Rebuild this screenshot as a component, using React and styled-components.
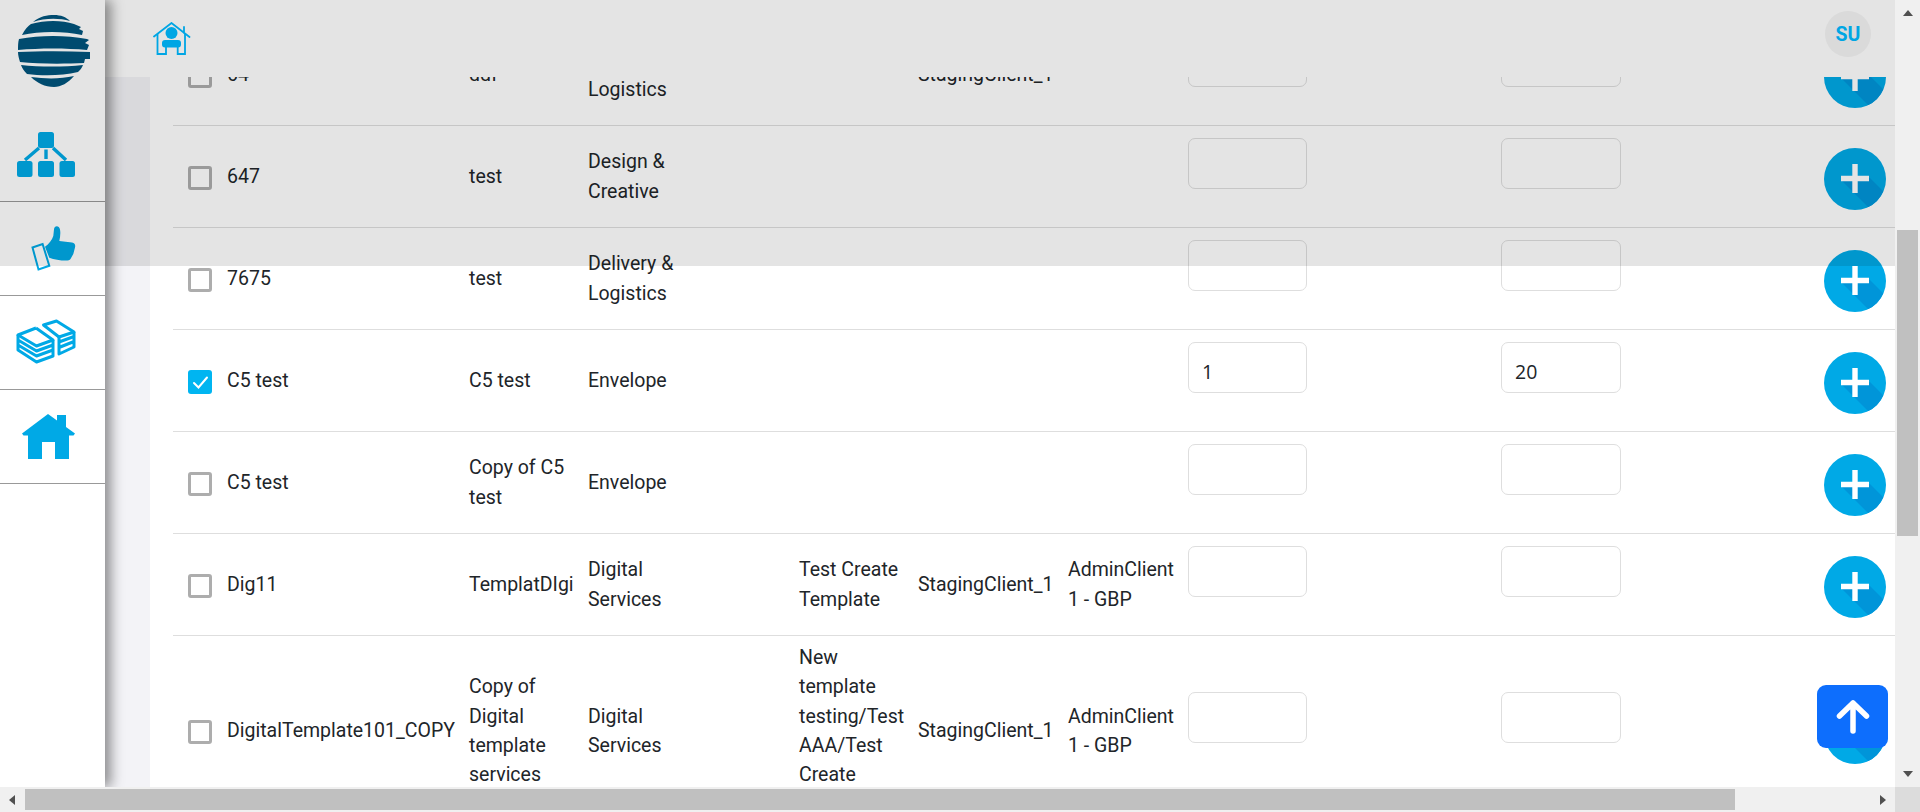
import React from 'react';
import styled, { createGlobalStyle } from 'styled-components';

const rows = [
  { name: '64', template: 'ddf', category: 'Delivery & Logistics', client: 'StagingClient_1' },
  { name: '647', template: 'test', category: 'Design & Creative' },
  { name: '7675', template: 'test', category: 'Delivery & Logistics' },
  { name: 'C5 test', template: 'C5 test', category: 'Envelope', checked: true, qty: '1', price: '20' },
  { name: 'C5 test', template: 'Copy of C5 test', category: 'Envelope' },
  {
    name: 'Dig11',
    template: 'TemplatDIgi',
    category: 'Digital Services',
    path: 'Test Create Template',
    client: 'StagingClient_1',
    admin: 'AdminClient 1 - GBP',
  },
  {
    name: 'DigitalTemplate101_COPY',
    template: 'Copy of Digital template services',
    category: 'Digital Services',
    path: 'New template testing/Test AAA/Test Create Template',
    client: 'StagingClient_1',
    admin: 'AdminClient 1 - GBP',
  },
];

const GlobalStyle = createGlobalStyle`
  html, body {
    margin: 0;
    height: 100%;
    overflow: hidden;
    font-family: Roboto, "Liberation Sans", sans-serif;
    color: #212529;
  }
  * { box-sizing: border-box; }
`;

const Page = styled.div`
  position: relative;
  width: 1920px;
  height: 812px;
  display: grid;
  grid-template-columns: 1895px 25px;
  grid-template-rows: 787px 25px;
  overflow: hidden;
  background: #fff;
`;

const Viewport = styled.div`
  display: flex;
  min-width: 0;
  min-height: 0;
  overflow: hidden;
`;

const Sidebar = styled.nav`
  position: relative;
  z-index: 2;
  flex: 0 0 105px;
  background: #fff;
  box-shadow: 6px 0 12px rgba(0, 0, 0, 0.42);
`;

const LogoBox = styled.div`
  height: 108px;
  padding: 15px 0 0 18px;
  svg { display: block; }
`;

const NavItem = styled.div`
  height: 94px;
  border-bottom: 1px solid #999;
  svg { display: block; }
`;

const Main = styled.div`
  flex: 1;
  min-width: 0;
  display: flex;
  flex-direction: column;
`;

const Header = styled.header`
  position: relative;
  z-index: 1;
  flex: 0 0 77px;
  display: flex;
  align-items: flex-start;
  justify-content: space-between;
  padding: 22px 24px 0 48px;
  background: #fff;
`;

const Avatar = styled.div`
  width: 46px;
  height: 46px;
  margin-top: -11px;
  border-radius: 50%;
  background: #f4f4f4;
  color: #00baff;
  font-size: 19.5px;
  font-weight: 700;
  display: flex;
  align-items: center;
  justify-content: center;
`;

const Body = styled.div`
  flex: 1;
  min-height: 0;
  overflow: hidden;
  padding-left: 45px;
  background: #f3f3f7;
`;

const Table = styled.div`
  height: 100%;
  overflow: hidden;
  padding-left: 23px;
  background: #fff;
`;

const Rows = styled.div`
  margin-top: -53px;
`;

const Row = styled.div`
  display: grid;
  grid-template-columns: 54px 242px 119px 211px 119px 150px 120px 313px 323px 71px;
  align-items: center;
  min-height: 102px;
  padding: 7px 0;
  border-bottom: 1px solid #dedede;
`;

const CheckBox = styled.span`
  width: 24px;
  height: 24px;
  margin: 3px 0 0 15px;
  border-radius: 3px;
  border: ${(p) => (p.$checked ? 'none' : '3px solid #adadad')};
  background: ${(p) => (p.$checked ? '#00b5f1' : '#fff')};
  display: flex;
  align-items: center;
  justify-content: center;
`;

const Cell = styled.div`
  font-size: 19.5px;
  line-height: 29.25px;
  padding-right: ${(p) => p.$pad || 0}px;
`;

const NumberBox = styled.input`
  display: block;
  width: ${(p) => p.$width}px;
  height: 51px;
  margin-bottom: 27px;
  padding: 8px 13px 0;
  border: 1px solid #dedede;
  border-radius: 7px;
  background: #fff;
  color: #212529;
  font-family: "Open Sans", sans-serif;
  font-size: 19.5px;
  outline: none;
`;

const AddButton = styled.button`
  position: relative;
  width: 62px;
  height: 62px;
  margin-top: 5px;
  padding: 0;
  border: none;
  border-radius: 50%;
  overflow: hidden;
  background: #00a9e6;
  svg { display: block; }
`;

const BackToTop = styled.button`
  position: absolute;
  z-index: 4;
  left: 1817px;
  top: 685px;
  width: 71px;
  height: 63px;
  padding: 0;
  border: none;
  border-radius: 9px;
  background: #0d6efd;
  display: flex;
  align-items: center;
  justify-content: center;
`;

const Dim = styled.div`
  position: absolute;
  z-index: 3;
  left: 0;
  top: 0;
  width: 1895px;
  height: 266px;
  background: rgba(0, 0, 0, 0.105);
  pointer-events: none;
`;

const VerticalBar = styled.div`
  grid-column: 2;
  grid-row: 1;
  display: flex;
  flex-direction: column;
  align-items: center;
  background: #f0f0f0;
`;

const HorizontalBar = styled.div`
  grid-column: 1;
  grid-row: 2;
  display: flex;
  align-items: center;
  background: #f0f0f0;
`;

const BarCorner = styled.div`
  grid-column: 2;
  grid-row: 2;
  background: #dcdcdc;
`;

const Arrow = styled.span`
  flex: 0 0 auto;
  width: 0;
  height: 0;
  border-style: solid;
  border-color: transparent;
  ${(p) => p.$dir === 'up' && 'margin-top: 10px; border-width: 0 5.5px 6px; border-bottom-color: #505050;'}
  ${(p) => p.$dir === 'down' && 'margin-top: auto; margin-bottom: 10px; border-width: 6px 5.5px 0; border-top-color: #505050;'}
  ${(p) => p.$dir === 'left' && 'margin-left: 9px; border-width: 5.5px 6px 5.5px 0; border-right-color: #505050;'}
  ${(p) => p.$dir === 'right' && 'margin-left: auto; margin-right: 9px; border-width: 5.5px 0 5.5px 6px; border-left-color: #505050;'}
`;

const VerticalThumb = styled.div`
  width: 21px;
  height: 306px;
  margin-top: 214px;
  background: #c0c0c0;
`;

const HorizontalThumb = styled.div`
  width: 1710px;
  height: 21px;
  margin-left: 10px;
  background: #c0c0c0;
`;

const GlobeLogo = () => (
  <svg width="72" height="72" viewBox="0 0 72 72" fill="#00547d">
    <path d="M15 7 C22 1 29 0 36 0 C43 0 48 2 52 6 C41 3 27 3 15 7Z" />
    <path d="M4 20 C7 14 10 11 13 9 C27 5 44 5 56 9 L63 12 L61 14 L65 16 L64 20 C46 16 22 16 4 20Z" />
    <path d="M1 24 C22 20 48 20 69 24 L71 25 L67 28 L71 30 L69 35 C48 33 22 33 0 35 C0 31 0 27 1 24Z" />
    <path d="M0 37 C22 36 48 36 72 37 L72 44 L67 44 L66 48 C46 49 20 49 2 47 C1 44 0 40 0 37Z" />
    <path d="M3 50 C22 52 46 52 65 50 C64 53 62 55 60 57 C44 61 24 61 9 59 C6 56 4 53 3 50Z" />
    <path d="M13 62 C28 64 43 64 56 61 C50 68 43 72 36 72 C27 72 19 68 13 62Z" />
  </svg>
);

const OrgIcon = () => (
  <svg width="105" height="93" viewBox="0 1 105 93" fill="#00a9e6">
    <rect x="38" y="25" width="16" height="16" rx="2.5" />
    <rect x="17" y="54" width="15.5" height="16" rx="2.5" />
    <rect x="38" y="54" width="16" height="16" rx="2.5" />
    <rect x="59.5" y="54" width="15.5" height="16" rx="2.5" />
    <path d="M46 42.5V52M39 41L25 53M53 41L66 53" stroke="#00a9e6" strokeWidth="3.4" fill="none" />
  </svg>
);

const ThumbIcon = () => (
  <svg width="105" height="93" viewBox="0 1 105 93" fill="#00a9e6">
    <path d="M45 45.7 C49 43 52 39 53.3 35 L54 28.3 C54.3 24.5 59 24 60 28.5 C60.7 32 60.2 36 59.3 40 L72 41.5 C75 42.3 75.6 44 75 46.5 L73.3 53 L70.5 58 C69.8 59.3 68 59.6 66 59.6 C60 59.6 54 58.5 49.3 56.7Z" />
    <path d="M32.5 46.5 L42.6 43 L49.3 64.8 L38.5 68.5Z" fill="none" stroke="#00a9e6" strokeWidth="2" />
  </svg>
);

const MoneyIcon = () => (
  <svg width="105" height="93" viewBox="0 1 105 93" fill="none" stroke="#00a9e6" strokeWidth="3" strokeLinejoin="round">
    <path d="M36 33 L18 40 L36.5 51 L53 45 L36 33" />
    <path d="M43.5 30 L56.5 26 L74 37 L59 42Z" />
    <path d="M18 40 V45 L36.5 56 L53 50M18 45 V50 L36.5 61 L53 55M18 50 V55 L36.5 67 L53 61V45" />
    <path d="M59 42 V59 L74 52 V37M59 47 L74 41.5M59 52.5 L74 46.5" />
  </svg>
);

const HomeIcon = () => (
  <svg width="105" height="93" viewBox="0 1 105 93" fill="#00a9e6">
    <path d="M48 25 L57 31.5 V26 H66 V38 L75 44.5 L73.5 46.5 H69 V70 H55 V53 H42 V70 H28 V46.5 H23.5 L22 44.5Z" />
  </svg>
);

const HeaderIcon = () => (
  <svg width="38" height="34" viewBox="0 0 38 34" fill="none" stroke="#00baff" strokeWidth="1.8">
    <path d="M1 14.5 L18.5 1 L36.5 15M31 5V11" strokeLinecap="round" />
    <path d="M4.5 12 V32 H13 V25M24.7 25 V32 H32 V12" />
    <circle cx="18.5" cy="11" r="6" fill="#00baff" stroke="none" />
    <rect x="9" y="18" width="19" height="7.5" rx="3" fill="#00baff" stroke="none" />
  </svg>
);

const PlusGlyph = () => (
  <svg width="62" height="62" viewBox="0 0 62 62">
    <path d="M18 33 L48 63 H62 V46 L46 30Z" fill="#0095d9" />
    <path d="M31 16V45M17 30.5H45" stroke="#fff" strokeWidth="5.4" fill="none" />
  </svg>
);

const CheckGlyph = () => (
  <svg width="24" height="24" viewBox="0 0 24 24" fill="none" stroke="#fff" strokeWidth="2" strokeLinecap="round">
    <path d="M6 13 L10.5 17.5 L19 7.5" />
  </svg>
);

const UpGlyph = () => (
  <svg width="38" height="38" viewBox="0 0 38 38" fill="none" stroke="#fff" strokeWidth="5.5" strokeLinecap="round" strokeLinejoin="round">
    <path d="M19 33V5M5.5 18L19 5L32.5 18" />
  </svg>
);

const App = () => (
  <Page>
    <GlobalStyle />
    <Viewport>
      <Sidebar>
        <LogoBox>
          <GlobeLogo />
        </LogoBox>
        <NavItem>
          <OrgIcon />
        </NavItem>
        <NavItem>
          <ThumbIcon />
        </NavItem>
        <NavItem>
          <MoneyIcon />
        </NavItem>
        <NavItem>
          <HomeIcon />
        </NavItem>
      </Sidebar>
      <Main>
        <Header>
          <HeaderIcon />
          <Avatar>SU</Avatar>
        </Header>
        <Body>
          <Table>
            <Rows>
              {rows.map((row, i) => (
                <Row key={i}>
                  <CheckBox $checked={row.checked}>{row.checked && <CheckGlyph />}</CheckBox>
                  <Cell>{row.name}</Cell>
                  <Cell $pad={14}>{row.template}</Cell>
                  <Cell $pad={100}>{row.category}</Cell>
                  <Cell $pad={12}>{row.path}</Cell>
                  <Cell>{row.client}</Cell>
                  <Cell $pad={12}>{row.admin}</Cell>
                  <NumberBox $width={119} defaultValue={row.qty} />
                  <NumberBox $width={120} defaultValue={row.price} />
                  <AddButton aria-label="add">
                    <PlusGlyph />
                  </AddButton>
                </Row>
              ))}
            </Rows>
          </Table>
        </Body>
      </Main>
    </Viewport>
    <VerticalBar>
      <Arrow $dir="up" />
      <VerticalThumb />
      <Arrow $dir="down" />
    </VerticalBar>
    <HorizontalBar>
      <Arrow $dir="left" />
      <HorizontalThumb />
      <Arrow $dir="right" />
    </HorizontalBar>
    <BarCorner />
    <Dim />
    <BackToTop aria-label="back to top">
      <UpGlyph />
    </BackToTop>
  </Page>
);

export default App;
